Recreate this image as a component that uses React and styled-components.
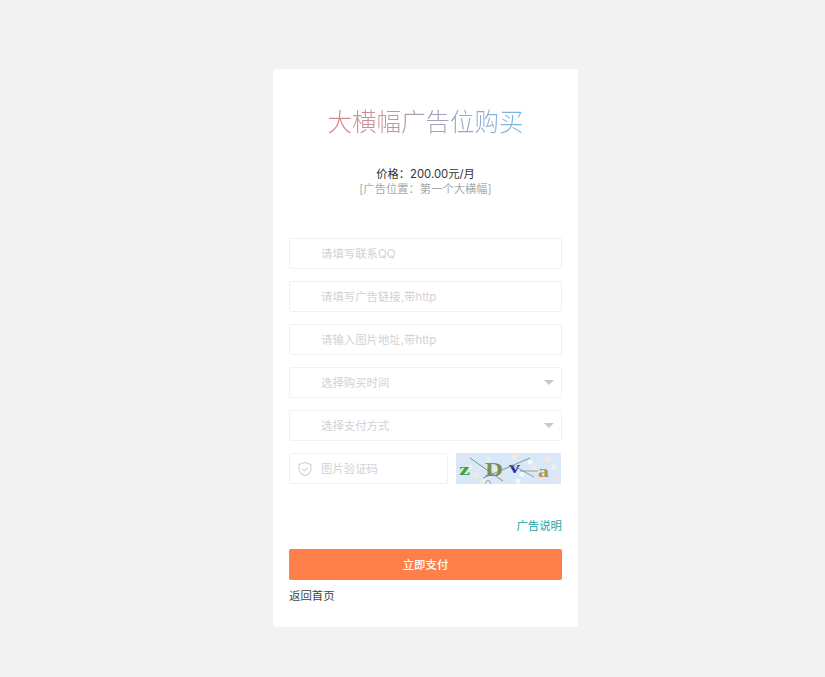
import React from "react"
import styled, { createGlobalStyle } from "styled-components"

const Global = createGlobalStyle`
  html, body {
    margin: 0;
    padding: 0;
    background: #f2f2f2;
    font-family: Inter, "Noto Sans CJK SC", sans-serif;
  }
  * {
    box-sizing: border-box;
  }
`

const Page = styled.div`
  display: flex;
  justify-content: center;
  min-height: 677px;
  padding: 69px 0 0 26px;
`

const Card = styled.div`
  width: 305px;
  height: 558px;
  background: #fff;
  border-radius: 4px;
  padding: 0 16px;
`

const Title = styled.h1`
  margin: 36px 0 0;
  height: 34px;
  line-height: 34px;
  font-size: 24.5px;
  font-weight: 300;
  text-align: center;
  white-space: nowrap;
  background: linear-gradient(to right, #dc8686 15%, #78b6e4 85%);
  -webkit-background-clip: text;
  background-clip: text;
  color: transparent;
`

const Price = styled.div`
  margin-top: 28px;
  font-size: 11.3px;
  line-height: 15px;
  color: #333;
  text-align: center;
`

const Place = styled.div`
  font-size: 11.3px;
  line-height: 15px;
  color: #aaa;
  text-align: center;
`

const Form = styled.div`
  margin-top: 41px;
  display: flex;
  flex-direction: column;
  gap: 12px;
`

const Field = styled.div`
  position: relative;
  display: flex;
  align-items: center;
  height: 31px;
  width: ${p => p.$width || "100%"};
  padding: 0 0 2px 31px;
  border: 1px solid #f1f1f1;
  border-radius: 2px;
  font-size: 11.4px;
  color: #d2d2d2;
`

const Arrow = styled.span`
  position: absolute;
  right: 7px;
  top: 12px;
  width: 0;
  height: 0;
  border-style: solid;
  border-width: 5px 5px 0;
  border-color: #c8c8c8 transparent transparent;
`

const ShieldBox = styled.span`
  position: absolute;
  left: 7px;
  top: 7px;
  display: flex;
`

const CaptchaRow = styled.div`
  display: flex;
  justify-content: space-between;
  padding-right: 1px;
`

const CaptchaWrap = styled.div`
  width: 105px;
  height: 31px;
  display: flex;
`

const Help = styled.div`
  margin-top: 35px;
  font-size: 11.4px;
  line-height: 15px;
  color: #1aa3a3;
  text-align: right;
`

const PayButton = styled.div`
  margin-top: 15px;
  height: 31px;
  padding-bottom: 2px;
  display: flex;
  align-items: center;
  justify-content: center;
  background: #ff7f4a;
  border-radius: 2px;
  color: #fff;
  font-size: 11.4px;
  font-weight: 500;
`

const Back = styled.div`
  margin-top: 9px;
  font-size: 11.4px;
  line-height: 15px;
  color: #444;
`

const Shield = () => (
  <svg width="16" height="16" viewBox="0 0 16 16" fill="none" stroke="#d2d2d2" strokeWidth="1.1">
    <path d="M8 1.5 L14 3.4 V8.2 C14 11.4 11 13.6 8 14.7 C5 13.6 2 11.4 2 8.2 V3.4 Z" />
    <path d="M5.2 7.8 L7.4 10 L11 6.4" />
  </svg>
)

const dots = [
  [8, 5, "#f6dbe6"], [20, 22, "#f8e6d6"], [33, 6, "#e8f2dc"], [47, 26, "#f6dbe6"],
  [58, 4, "#f7e8dc"], [66, 21, "#f3f6fb"], [74, 9, "#f3f6fb"], [84, 25, "#f6dbe6"],
  [92, 6, "#f8e6d6"], [98, 14, "#f0f0e6"], [14, 14, "#eef2e2"], [40, 16, "#f3e4ee"],
  [78, 15, "#f6eedc"], [100, 26, "#f6dde8"], [28, 28, "#f3ecdf"], [62, 28, "#f3f6fb"]
]

const Captcha = () => (
  <svg width="105" height="31" viewBox="0 0 105 31">
    <rect width="105" height="31" fill="#d9e8f8" />
    {dots.map(([x, y, c]) => (
      <circle key={x} cx={x} cy={y} r="2.6" fill={c} />
    ))}
    <g fontFamily="Liberation Serif, serif" fontWeight="700">
      <text x="3" y="22" fontSize="17" fill="#3aa53a" textLength="11" lengthAdjust="spacingAndGlyphs">z</text>
      <text x="29" y="23" fontSize="19" fill="#7b9150" textLength="18" lengthAdjust="spacingAndGlyphs">D</text>
      <text x="53" y="20" fontSize="17" fill="#33339c" textLength="11" lengthAdjust="spacingAndGlyphs">v</text>
      <text x="82" y="24" fontSize="17" fill="#a8995a" textLength="11" lengthAdjust="spacingAndGlyphs">a</text>
    </g>
    <path d="M14 5 L47 28" stroke="#5c8a5c" strokeWidth="0.8" fill="none" />
    <path d="M27 25 L74 5" stroke="#6a8a6a" strokeWidth="0.8" fill="none" />
    <path d="M64 18 L82 18" stroke="#8a8a8a" strokeWidth="0.8" fill="none" />
    <path d="M58 13 L78 24" stroke="#5c8a7c" strokeWidth="0.7" fill="none" />
    <circle cx="32" cy="30" r="2.5" fill="none" stroke="#888" strokeWidth="0.7" />
  </svg>
)

const App = () => (
  <Page>
    <Global />
    <Card>
      <Title>大横幅广告位购买</Title>
      <Price>价格：200.00元/月</Price>
      <Place>[广告位置：第一个大横幅]</Place>
      <Form>
        <Field>请填写联系QQ</Field>
        <Field>请填写广告链接,带http</Field>
        <Field>请输入图片地址,带http</Field>
        <Field>
          选择购买时间
          <Arrow />
        </Field>
        <Field>
          选择支付方式
          <Arrow />
        </Field>
        <CaptchaRow>
          <Field $width="159px">
            <ShieldBox>
              <Shield />
            </ShieldBox>
            图片验证码
          </Field>
          <CaptchaWrap>
            <Captcha />
          </CaptchaWrap>
        </CaptchaRow>
      </Form>
      <Help>广告说明</Help>
      <PayButton>立即支付</PayButton>
      <Back>返回首页</Back>
    </Card>
  </Page>
)

export default App
